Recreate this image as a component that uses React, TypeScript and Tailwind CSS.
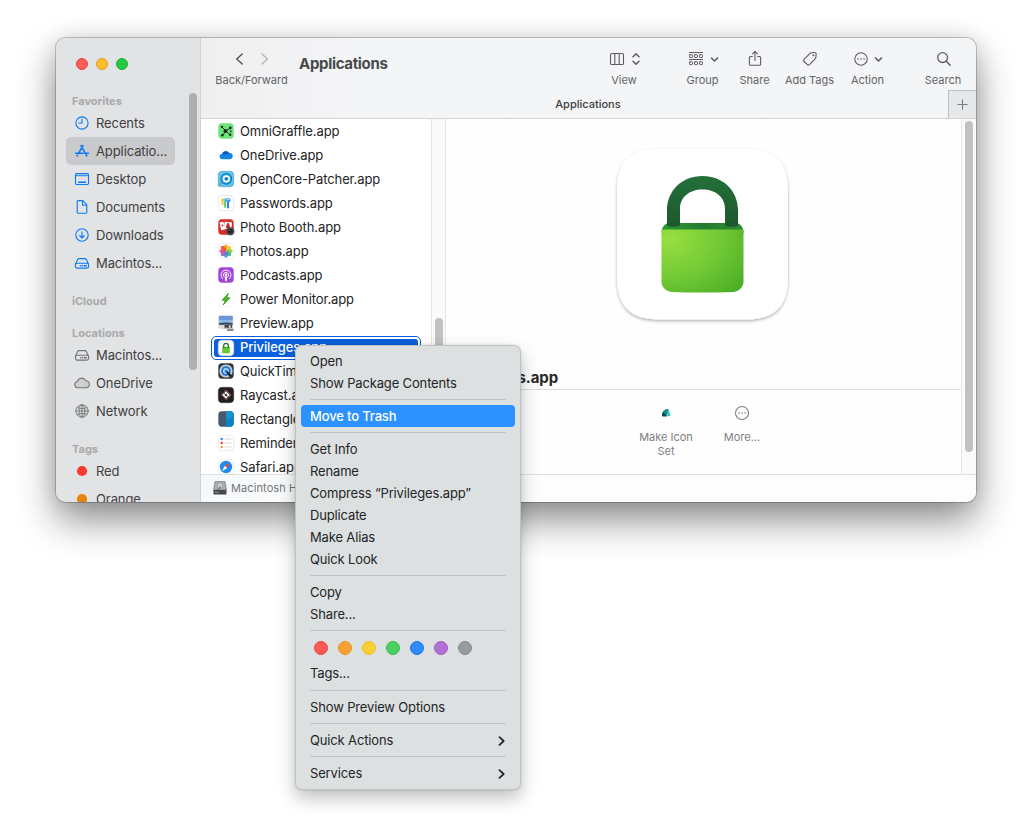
import React from "react";

type IconProps = { name: string };

const stroke = {
  fill: "none",
  stroke: "currentColor",
  strokeWidth: 1.1,
  strokeLinecap: "round" as const,
  strokeLinejoin: "round" as const,
};

function SideIcon({ name }: IconProps) {
  return (
    <svg width="16" height="16" viewBox="0 0 16 16" {...stroke} className="shrink-0">
      {name === "recents" && (
        <>
          <circle cx="8" cy="8" r="6.1" />
          <path d="M8 4v4H4.8" />
        </>
      )}
      {name === "apps" && (
        <g strokeWidth="1.6">
          <path d="M7 2.6l5.8 10.2M9 2.6L4.4 10.6M1.6 10.3h7.6M12 10.3h2.4M3.4 12.4l-.4.6" />
        </g>
      )}
      {name === "desktop" && (
        <>
          <rect x="1.5" y="2.5" width="13" height="11" rx="1.2" />
          <path d="M1.5 4.6h13" strokeOpacity=".7" />
          <path d="M2 3.6h12" strokeOpacity=".3" />
          <path d="M4 11.3h8" strokeWidth="1.4" strokeLinecap="butt" />
        </>
      )}
      {name === "doc" && (
        <path d="M4.3 1.6h4.5l4 4.2v7.4a1.1 1.1 0 0 1-1.1 1.1H4.3a1.1 1.1 0 0 1-1.1-1.1V2.7a1.1 1.1 0 0 1 1.1-1.1zM8.5 1.8v4.4h4.2" />
      )}
      {name === "down" && (
        <>
          <circle cx="8" cy="8" r="6.2" />
          <path d="M8 4.7v6.2M5.6 8.6L8 11l2.4-2.4" />
        </>
      )}
      {name === "disk" && (
        <>
          <path d="M1.5 9.2l2.1-4.6c.3-.7.8-1 1.5-1h5.8c.7 0 1.2.3 1.5 1l2.1 4.6" />
          <rect x="1.4" y="8.3" width="13.2" height="4.8" rx="1.8" />
          <path d="M6.5 10.7h.2M8.4 10.7h.2M10.3 10.7h2" strokeWidth="1.4" />
        </>
      )}
      {name === "cloud" && (
        <path
          d="M3.6 12.8a3.2 3.2 0 0 1-.3-6.3A4.500 4.500 0 0 1 11.700 5.700a3.600 3.600 0 0 1 .9 7.100z"
          fill="#cfd0d1"
        />
      )}
      {name === "globe" && (
        <g strokeWidth=".9">
          <circle cx="8" cy="8" r="6.200" />
          <ellipse cx="8" cy="8" rx="3" ry="6.200" />
          <path d="M8 1.800v12.400M1.800 8h12.400M3 4.600c3 1.400 7 1.400 10 0M3 11.400c3-1.400 7-1.400 10 0" />
        </g>
      )}
      {name === "red" && <circle cx="8" cy="8" r="5.100" fill="#fb3a2f" stroke="none" />}
      {name === "orange" && <circle cx="8" cy="8" r="5.100" fill="#e8840c" stroke="none" />}
    </svg>
  );
}

function SideRow({ icon, label, active, gray }: { icon: string; label: string; active?: boolean; gray?: boolean }) {
  return (
    <div
      className={
        "flex h-7 w-[109px] items-center gap-[6px] rounded-[5px] pl-2 text-[13px] tracking-[-0.1px] text-[#3f4041] " +
        (active ? "bg-[#c9cacc]" : "")
      }
    >
      <span className={gray ? "text-[#737475]" : "text-[#0a79f5]"}>
        <SideIcon name={icon} />
      </span>
      <span className="pt-[2px] whitespace-nowrap">{label}</span>
    </div>
  );
}

function Heading({ children }: { children: React.ReactNode }) {
  return <div className="h-4 pl-[6px] text-[11px] leading-4 font-bold text-[#a8a9aa]">{children}</div>;
}

function Sidebar() {
  return (
    <aside className="flex w-[145px] shrink-0 flex-col border-r border-[#d0d1d2] bg-[#e1e3e5]">
      <div className="flex h-[55px] shrink-0 gap-2 pt-5 pl-5">
        <span className="size-3 rounded-full border border-[#e2463f] bg-[#ff5f57]" />
        <span className="size-3 rounded-full border border-[#e0a02a] bg-[#febc2e]" />
        <span className="size-3 rounded-full border border-[#1fac32] bg-[#28c840]" />
      </div>
      <div className="flex min-h-0 flex-1">
        <div className="flex w-[133px] shrink-0 flex-col gap-4 overflow-hidden pl-[10px]">
          <section>
            <Heading>Favorites</Heading>
            <SideRow icon="recents" label="Recents" />
            <SideRow icon="apps" label="Applicatio..." active />
            <SideRow icon="desktop" label="Desktop" />
            <SideRow icon="doc" label="Documents" />
            <SideRow icon="down" label="Downloads" />
            <SideRow icon="disk" label="Macintos..." />
          </section>
          <section>
            <Heading>iCloud</Heading>
          </section>
          <section>
            <Heading>Locations</Heading>
            <SideRow icon="disk" label="Macintos..." gray />
            <SideRow icon="cloud" label="OneDrive" gray />
            <SideRow icon="globe" label="Network" gray />
          </section>
          <section>
            <Heading>Tags</Heading>
            <SideRow icon="red" label="Red" />
            <SideRow icon="orange" label="Orange" />
          </section>
        </div>
        <div className="h-[277px] w-2 rounded-full bg-[#aeafb1]" />
      </div>
    </aside>
  );
}

function Tool({ label, width, children }: { label: string; width: string; children: React.ReactNode }) {
  return (
    <div className={"flex shrink-0 flex-col items-center text-[#5c5d5f] " + width}>
      <div className="flex h-[18px] items-center justify-center gap-[6px] pl-px">{children}</div>
      <div className="mt-1 text-[11px] leading-4 whitespace-nowrap text-[#636466]">{label}</div>
    </div>
  );
}

function DownChevron() {
  return (
    <svg width="9" height="8" viewBox="0 0 9 8" {...stroke} strokeWidth="1.600">
      <path d="M1.500 3l3 3 3-3" />
    </svg>
  );
}

function Toolbar() {
  return (
    <header className="flex h-[81px] shrink-0 flex-col border-b border-[#d2d3d4] bg-linear-to-r from-[#efeff0] via-[#f4f5f7] via-20% to-[#f4f5f7]">
      <div className="flex h-[52px] shrink-0 pt-3">
        <div className="flex w-[101px] shrink-0 flex-col items-center">
          <svg width="36" height="18" viewBox="0 0 36 18" {...stroke} strokeWidth="1.300">
            <path d="M8.200 4l-5.500 5 5.500 5" stroke="#4c4d4e" />
            <path d="M28 4l5.500 5-5.500 5" stroke="#b4b5b6" />
          </svg>
          <div className="mt-1 text-[11px] leading-4 text-[#636466]">Back/Forward</div>
        </div>
        <div className="w-[288px] pt-[4px] text-[15px] leading-5 font-bold tracking-[-0.32px] text-[#48494b]">
          <span className="-ml-[3px]">Applications</span>
        </div>
        <Tool label="View" width="w-[68px]">
          <svg width="16" height="16" viewBox="0 0 16 16" {...stroke}>
            <rect x="1.500" y="2.500" width="13" height="11" rx="1.300" />
            <path d="M5.800 2.500v11M10.200 2.500v11" />
          </svg>
          <svg width="10" height="14" viewBox="0 0 10 14" {...stroke} strokeWidth="1.500">
            <path d="M2 4.800l3-3 3 3M2 9.200l3 3 3-3" />
          </svg>
        </Tool>
        <div className="w-[14px]" />
        <Tool label="Group" width="w-[61px]">
          <svg width="16" height="16" viewBox="0 0 16 16" {...stroke} strokeWidth="1">
            <path d="M1 1.500h14M1 8.500h14" strokeLinecap="butt" />
            <g>
              <rect x="1.500" y="3.700" width="3" height="2.800" rx=".6" />
              <rect x="6.500" y="3.700" width="3" height="2.800" rx=".6" />
              <rect x="11.500" y="3.700" width="3" height="2.800" rx=".6" />
              <rect x="1.500" y="10.800" width="3" height="2.800" rx=".6" />
              <rect x="6.500" y="10.800" width="3" height="2.800" rx=".6" />
              <rect x="11.500" y="10.800" width="3" height="2.800" rx=".6" />
            </g>
          </svg>
          <DownChevron />
        </Tool>
        <Tool label="Share" width="w-[43px]">
          <svg width="16" height="18" viewBox="0 0 16 18" {...stroke}>
            <path d="M5.300 6.500H3.500a1.100 1.100 0 0 0-1.100 1.100v6.600a1.100 1.100 0 0 0 1.100 1.100h9a1.100 1.100 0 0 0 1.100-1.100V7.600a1.100 1.100 0 0 0-1.100-1.100h-1.800M8 10.500V1.600M5.600 3.900L8 1.500l2.400 2.400" />
          </svg>
        </Tool>
        <Tool label="Add Tags" width="w-[67px]">
          <svg width="18" height="18" viewBox="0 0 18 18" {...stroke}>
            <path d="M3.100 9.300l5.600-5.600c.5-.5 1-.8 1.700-.9l3-.3c1.200-.1 1.800.6 1.700 1.700l-.2 3c0 .7-.3 1.200-.8 1.700l-5.600 5.700c-.7.7-1.500.7-2.200 0l-3.200-3.100c-.7-.7-.7-1.500 0-2.200z" />
            <circle cx="12.300" cy="5.300" r=".7" fill="currentColor" strokeWidth=".4" />
          </svg>
        </Tool>
        <Tool label="Action" width="w-[49px]">
          <svg width="14" height="14" viewBox="0 0 14 14" {...stroke}>
            <circle cx="7" cy="7" r="6.200" />
            <path d="M4 7h.1M7 7h.1M10 7h.1" strokeWidth="1.500" />
          </svg>
          <DownChevron />
        </Tool>
        <div className="w-[26px]" />
        <Tool label="Search" width="w-[50px]">
          <svg width="16" height="16" viewBox="0 0 16 16" {...stroke} strokeWidth="1.300">
            <circle cx="6.600" cy="6.600" r="4.900" />
            <path d="M10.200 10.200l4 4" strokeWidth="1.500" />
          </svg>
        </Tool>
      </div>
      <div className="flex flex-1">
        <div className="flex-1 pt-[6px] text-center text-[11px] leading-4 font-medium text-[#3d3e40]">
          <span className="pl-[27px]">Applications</span>
        </div>
        <div className="flex w-7 items-center justify-center border-t border-l border-[#bdbec0] bg-[#e7e8ea] pr-px text-[#7b7c7d]">
          <svg width="11" height="11" viewBox="0 0 11 11" {...stroke}>
            <path d="M5.500 .8v9.400M.8 5.500h9.400" />
          </svg>
        </div>
      </div>
    </header>
  );
}

const petals = ["#f9a51a", "#e9d52c", "#9ecb3b", "#3fb883", "#4a90d9", "#8f63b8", "#e0529c", "#f0513c"];

function Tile({ fill, edge }: { fill: string; edge?: string }) {
  return <rect x=".3" y=".3" width="15.400" height="15.400" rx="3.600" fill={fill} stroke={edge || "none"} strokeWidth=".6" />;
}

function AppIcon({ name }: IconProps) {
  return (
    <svg width="16" height="16" viewBox="0 0 16 16" className="shrink-0 overflow-visible">
      {name === "omni" && (
        <>
          <Tile fill="#6fe27c" />
          <path d="M4 4l4 4 4.500-3M4.500 12.200L8 8l4 3.800" stroke="#153a1c" strokeWidth="1" fill="none" />
          <circle cx="7.400" cy="8" r="2" fill="#12301a" />
          <g fill="#12301a">
            <circle cx="4" cy="4" r="1.200" />
            <circle cx="12.300" cy="4.900" r="1.400" />
            <circle cx="4.300" cy="12.200" r="1.300" />
            <circle cx="12.200" cy="11.800" r="1.200" />
            <circle cx="12.800" cy="8.300" r=".9" />
          </g>
        </>
      )}
      {name === "onedrive" && (
        <>
          <path d="M4.300 12.200a2.600 2.600 0 0 1-.3-5.200A4.200 4.200 0 0 1 11.300 6a3.100 3.100 0 0 1 .6 6.200z" fill="#1485de" />
          <path d="M4 7a4.200 4.200 0 0 1 7.300-1c.4.800-3 .6-4 2z" fill="#0a5cb4" />
        </>
      )}
      {name === "opencore" && (
        <>
          <Tile fill="#65c6ee" edge="#3d93bb" />
          <circle cx="8.300" cy="7.800" r="5.900" fill="#1272ae" />
          <circle cx="8.300" cy="7.800" r="4.900" fill="#26a9e2" />
          <circle cx="8.300" cy="7.800" r="3.600" fill="#fff" />
          <circle cx="8.300" cy="7.800" r="1.900" fill="#1b83bc" />
          <path d="M.2 15.300l3.200-4" stroke="#7b8891" strokeWidth="1.200" />
        </>
      )}
      {name === "passwords" && (
        <>
          <Tile fill="#fff" edge="#dcdcdc" />
          <g strokeWidth="1.700" strokeLinecap="round">
            <path d="M4.600 5v4.500" stroke="#f2c531" />
            <path d="M7.100 5.500v6.500" stroke="#5cbe55" />
            <path d="M10 6v6.500" stroke="#2287e6" strokeWidth="2" />
          </g>
          <circle cx="4.600" cy="4.700" r="1.500" fill="#f4c936" />
          <circle cx="7" cy="4.700" r="1.500" fill="#6cc7dc" />
          <circle cx="10.200" cy="5.200" r="2.300" fill="#3aa3ee" />
          <circle cx="10.200" cy="4.400" r=".7" fill="#fff" />
        </>
      )}
      {name === "booth" && (
        <>
          <Tile fill="#dc2a27" />
          <rect x="2.300" y="3" width="4" height="8" rx=".5" fill="#fff" transform="rotate(-12 4 7)" />
          <rect x="6.300" y="3" width="7.500" height="7" rx=".5" fill="#fff" transform="rotate(5 10 6)" />
          <path d="M8 9V7.500a2 2 0 0 1 4 0V9z" fill="#c42b28" />
          <circle cx="10" cy="5.300" r="1.200" fill="#c42b28" />
          <circle cx="4.500" cy="6.500" r="1" fill="#c42b28" />
          <circle cx="12.300" cy="12.300" r="4.100" fill="#484848" />
          <circle cx="12.300" cy="12.300" r="2.300" fill="#202020" />
          <circle cx="11.600" cy="11.600" r=".7" fill="#777" />
        </>
      )}
      {name === "photos" && (
        <>
          <Tile fill="#fff" edge="#e6e6e6" />
          {petals.map((c, i) => (
            <ellipse key={c} cx="8" cy="4.500" rx="2.100" ry="3.100" fill={c} fillOpacity=".92" transform={`rotate(${i * 45} 8 8)`} />
          ))}
        </>
      )}
      {name === "podcasts" && (
        <>
          <Tile fill="#a444d8" />
          <g fill="none" stroke="#fff" strokeWidth=".9" strokeLinecap="round">
            <path d="M4.500 11.700a5 5 0 1 1 7 0" />
            <path d="M5.900 9.700a2.700 2.700 0 1 1 4.200 0" />
          </g>
          <circle cx="8" cy="7.800" r="1.300" fill="#fff" />
          <path d="M6.700 10.200a1.300 1 0 0 1 2.600 0l-.5 3.300a.8.800 0 0 1-1.600 0z" fill="#fff" />
        </>
      )}
      {name === "power" && (
        <>
          <Tile fill="#fff" edge="#f1f1f1" />
          <path d="M10.500 2.200L4 9.200h3.300L5.200 14l6.800-7.200H8.600z" fill="#3fc21b" stroke="#1e6d12" strokeWidth=".6" />
        </>
      )}
      {name === "preview" && (
        <>
          <rect x=".8" y=".8" width="14" height="12.500" rx="1.200" fill="#8fb8e8" stroke="#c9ccd2" strokeWidth=".5" />
          <rect x="1" y="1" width="13.600" height="4" fill="#6c97d6" />
          <path d="M1 9.500l5-1.500 8.600 1v4H1z" fill="#e0dccf" />
          <path d="M1 8.300c5-1 9-1 13.600-.2v1.700H1z" fill="#32435c" />
          <path d="M6.500 10.200h7.500v3.600H6.500z" fill="#303338" />
          <path d="M6 12.600h9.500v1.300H6z" fill="#c8cbd0" />
          <circle cx="11.800" cy="11.500" r="1" fill="#fff" />
          <path d="M9 15h6.500" stroke="#44474c" strokeWidth="1.300" />
        </>
      )}
      {name === "lock" && (
        <>
          <Tile fill="#fff" edge="#e4e4e4" />
          <path d="M5.700 7.500V5.600a2.300 2.300 0 0 1 4.600 0v1.900" fill="none" stroke="#236b38" strokeWidth="1.300" />
          <rect x="4.200" y="7" width="7.600" height="6.300" rx="1" fill="#66c530" />
          <path d="M4.300 7.400h7.400" stroke="#2b8a35" strokeWidth=".8" />
        </>
      )}
      {name === "quicktime" && (
        <>
          <Tile fill="#34383f" />
          <circle cx="8" cy="8" r="6.600" fill="#c9ced4" />
          <circle cx="8" cy="8" r="4.800" fill="#2173cf" />
          <circle cx="8" cy="8" r="3" fill="#a7dcfb" />
          <circle cx="8.200" cy="8.200" r="1.600" fill="#2c7cd0" />
          <path d="M9 9l4.200 4.500" stroke="#1d222b" strokeWidth="2.400" />
        </>
      )}
      {name === "raycast" && (
        <>
          <Tile fill="#201f21" edge="#5a3335" />
          <path d="M8 3L13 8l-5 5-5-5z" fill="none" stroke="#c95c5a" strokeWidth=".8" />
          <path d="M8 4.200L11.800 8 8 11.800 4.200 8z" fill="#fff" />
          <path d="M4.500 4.800l6.800 6.800M2.700 8l5.300 5.300" stroke="#201f21" strokeWidth=".7" />
          <path d="M8 6.500L9.500 8 8 9.500 6.500 8z" fill="#3a2527" />
        </>
      )}
      {name === "rectangle" && (
        <>
          <Tile fill="#47596e" />
          <path d="M8 .3h4.100a3.600 3.600 0 0 1 3.600 3.600v8.200a3.600 3.600 0 0 1-3.600 3.600H8z" fill="#0b83c0" />
          <path d="M8 .3h4.100a3.600 3.600 0 0 1 3.600 3.600V6L8 10z" fill="#1792ce" />
        </>
      )}
      {name === "reminders" && (
        <>
          <Tile fill="#fff" edge="#dfdfdf" />
          <circle cx="3.700" cy="4" r="1.200" fill="#2d7ff0" />
          <circle cx="3.700" cy="8" r="1.200" fill="#ee4136" />
          <circle cx="3.700" cy="12" r="1.200" fill="#f6981e" />
          <path d="M6.500 4h7M6.500 8h7M6.500 12h7" stroke="#d2d2d4" strokeWidth=".9" />
        </>
      )}
      {name === "safari" && (
        <>
          <Tile fill="#fff" edge="#e3e3e3" />
          <circle cx="8" cy="8" r="6.200" fill="#1f8cf0" />
          <path d="M12 4L9.200 9.200 6.800 6.800z" fill="#f04438" />
          <path d="M4 12l2.800-5.200 2.400 2.400z" fill="#fff" />
        </>
      )}
    </svg>
  );
}

const files: [string, string][] = [
  ["omni", "OmniGraffle.app"],
  ["onedrive", "OneDrive.app"],
  ["opencore", "OpenCore-Patcher.app"],
  ["passwords", "Passwords.app"],
  ["booth", "Photo Booth.app"],
  ["photos", "Photos.app"],
  ["podcasts", "Podcasts.app"],
  ["power", "Power Monitor.app"],
  ["preview", "Preview.app"],
  ["lock", "Privileges.app"],
  ["quicktime", "QuickTime Player.app"],
  ["raycast", "Raycast.app"],
  ["rectangle", "Rectangle.app"],
  ["reminders", "Reminders.app"],
  ["safari", "Safari.app"],
];

function FileList() {
  return (
    <div className="w-[230px] shrink-0 overflow-hidden pl-[10px] text-[13px] tracking-[-0.1px]">
      {files.map(([icon, label], i) =>
        icon === "lock" ? (
          <div key={i} className="mt-px -mb-px h-6 w-[210px] rounded-[5px] border border-[#0a5fd9] p-[2px]">
            <div className="flex h-full items-center gap-[6px] rounded-[3px] bg-[#0a60dd] pl-1 font-medium text-white">
              <span className="-mt-px">
                <AppIcon name={icon} />
              </span>
              <span>{label}</span>
            </div>
          </div>
        ) : (
          <div key={i} className="flex h-6 items-center gap-[6px] pl-[7px] text-[#232324]">
            <AppIcon name={icon} />
            <span className="pt-px whitespace-nowrap">{label}</span>
          </div>
        )
      )}
    </div>
  );
}

function BigLock() {
  return (
    <svg width="190" height="190" viewBox="0 0 190 190" className="overflow-visible">
      <defs>
        <radialGradient id="body" cx=".1" cy=".15" r="1.200">
          <stop offset="0" stopColor="#98df41" />
          <stop offset=".5" stopColor="#73ca35" />
          <stop offset="1" stopColor="#48ab25" />
        </radialGradient>
        <linearGradient id="shackle" x1="0" y1="0" x2="0" y2="1">
          <stop offset="0" stopColor="#24703a" />
          <stop offset="1" stopColor="#1d572d" />
        </linearGradient>
        <linearGradient id="lid" x1="0" y1="0" x2="1" y2="0">
          <stop offset="0" stopColor="#2d9a2d" />
          <stop offset=".5" stopColor="#257c31" />
          <stop offset="1" stopColor="#2d8c30" />
        </linearGradient>
        <filter id="soft" x="-20%" y="-20%" width="140%" height="140%">
          <feDropShadow dx="0" dy="1.500" stdDeviation="1.700" floodColor="#000" floodOpacity=".32" />
        </filter>
      </defs>
      <path
        d="M51 10h88c29 0 42 13 42 42v86c0 29-13 42.500-42 42.500H52C23 180.500 10 167 10 138V52c0-29 12-42 41-42z"
        fill="#fff"
        filter="url(#soft)"
      />
      <g transform="translate(0 .5)">
        <path d="M54.500 93.500c0-5.500 3-10 8-10h66c5 0 8 4.500 8 10z" fill="url(#lid)" />
        <path
          d="M60 86V71c0-20 15-34.500 35.500-34.500S131 51 131 71v15c-3 1.800-10 1.800-13 0V69c0-11-9-19-22.500-19S73 58 73 69v17c-3 1.800-10 1.800-13 0z"
          fill="url(#shackle)"
        />
        <path d="M54.500 90h82v52.500c0 5-5 9.500-10 9.900-20 .8-42 .8-62 0-5-.4-10-4.900-10-9.900z" fill="url(#body)" />
      </g>
    </svg>
  );
}

function Preview() {
  return (
    <div className="flex min-w-0 flex-1 flex-col bg-[#fefefe]">
      <div className="flex h-[271px] shrink-0 flex-col border-b border-[#dededf]">
        <div className="flex h-[248px] justify-center pt-5 pr-[3px]">
          <BigLock />
        </div>
        <div className="pl-[7px] text-[15px] leading-[22px] font-bold tracking-[-0.1px] text-[#29292a]">
          <div className="w-[105px] text-right whitespace-nowrap">Privileges.app</div>
        </div>
      </div>
      <div className="flex pt-[15px] pl-[182px] text-center text-[11px] leading-[14px] text-[#7d7e7f]">
        <div className="flex w-[76px] flex-col items-center">
          <svg width="16" height="16" viewBox="0 0 16 16">
            <path d="M4.200 11.200c-.5-3 .8-6 4.200-7.200l2 .3 1.800 6.700z" fill="#168c8b" />
            <path d="M4.200 11.200c-.3-1.500 0-3 1-4.500L9 11.400z" fill="#143f50" />
            <path d="M8.300 11.300l2-6.500 2 6z" fill="#31d2bd" />
          </svg>
          <div className="mt-[9px] w-[60px]">Make Icon Set</div>
        </div>
        <div className="flex w-[76px] flex-col items-center">
          <svg width="16" height="16" viewBox="0 0 16 16" {...stroke}>
            <circle cx="8" cy="8" r="6.500" />
            <path d="M5 8h.1M8 8h.1M11 8h.1" strokeWidth="1.500" />
          </svg>
          <div className="mt-[9px]">More...</div>
        </div>
      </div>
    </div>
  );
}

function MenuItem({ label, active, arrow }: { label: string; active?: boolean; arrow?: boolean }) {
  return (
    <div
      className={
        "mx-[5px] flex h-[22px] items-center justify-between rounded-[4px] px-[9px] whitespace-nowrap " +
        (active ? "bg-[#2b92ff] font-medium text-white" : "")
      }
    >
      <span className="pt-[2px]">{label}</span>
      {arrow && (
        <svg width="9" height="12" viewBox="0 0 9 12" {...stroke} strokeWidth="1.800" className="mt-px">
          <path d="M2.500 2.200L6.700 6l-4.200 3.800" />
        </svg>
      )}
    </div>
  );
}

function Separator() {
  return <div className="mx-[14px] mt-[5px] mb-[5px] h-px bg-[#c0c4c5]" />;
}

function ContextMenu() {
  return (
    <div className="absolute top-[345px] left-[295px] flex h-[445px] w-[226px] flex-col rounded-[7px] border border-[#bfc2c3] bg-[#dce0e1] pt-1 text-[13px] tracking-[-0.15px] text-[#242526] shadow-[0_8px_18px_rgba(0,0,0,0.25),0_0_3px_rgba(0,0,0,0.12)]">
      <MenuItem label="Open" />
      <MenuItem label="Show Package Contents" />
      <Separator />
      <MenuItem label="Move to Trash" active />
      <Separator />
      <MenuItem label="Get Info" />
      <MenuItem label="Rename" />
      <MenuItem label="Compress “Privileges.app”" />
      <MenuItem label="Duplicate" />
      <MenuItem label="Make Alias" />
      <MenuItem label="Quick Look" />
      <Separator />
      <MenuItem label="Copy" />
      <MenuItem label="Share..." />
      <Separator />
      <div className="flex h-[25px] gap-[10px] pt-[5px] pl-[18px]">
        <span className="size-[14px] rounded-full border border-[#f0443c] bg-[#fc5b53]" />
        <span className="size-[14px] rounded-full border border-[#ee9020] bg-[#f8a136]" />
        <span className="size-[14px] rounded-full border border-[#ecc11d] bg-[#f8cf36]" />
        <span className="size-[14px] rounded-full border border-[#31bf49] bg-[#4bcf60]" />
        <span className="size-[14px] rounded-full border border-[#1475ec] bg-[#318cfa]" />
        <span className="size-[14px] rounded-full border border-[#a258ca] bg-[#b36fd8]" />
        <span className="size-[14px] rounded-full border border-[#87878a] bg-[#9a9a9d]" />
      </div>
      <div className="flex h-6 items-center pt-[2px] pl-[14px]">Tags...</div>
      <Separator />
      <MenuItem label="Show Preview Options" />
      <Separator />
      <MenuItem label="Quick Actions" arrow />
      <Separator />
      <MenuItem label="Services" arrow />
    </div>
  );
}

export default function App() {
  return (
    <div className="relative h-[816px] w-[1032px] overflow-hidden bg-white pt-[38px] pl-[56px] font-['Inter','Liberation_Sans',sans-serif]">
      <div className="flex h-[464px] w-[920px] overflow-hidden rounded-[10px] bg-white shadow-[0_0_0_1px_rgba(0,0,0,0.2),0_18px_38px_rgba(0,0,0,0.45),0_0_20px_rgba(0,0,0,0.1)]">
        <Sidebar />
        <main className="flex min-w-0 flex-1 flex-col">
          <Toolbar />
          <div className="flex min-h-0 flex-1">
            <FileList />
            <div className="flex w-[15px] shrink-0 flex-col items-center border-x border-[#e5e5e6] bg-[#fafafa] pt-[199px]">
              <div className="h-[90px] w-2 rounded-full bg-[#c1c1c2]" />
            </div>
            <Preview />
            <div className="flex w-[15px] shrink-0 flex-col items-center border-l border-[#e5e5e6] bg-[#fafafa] pt-[2px]">
              <div className="h-[331px] w-2 rounded-full bg-[#c1c1c2]" />
            </div>
          </div>
          <footer className="flex h-7 shrink-0 items-center gap-1 border-t border-[#dfe0e1] bg-linear-to-r from-[#f6f9fb] to-[#fdfdfd] to-30% pl-3 text-[11px] tracking-[0.1px] text-[#747576]">
            <svg width="14" height="14" viewBox="0 0 14 14" className="mb-[2px]">
              <path d="M2 .5h10l1.500 8.500H.5z" fill="#a9adb0" stroke="#6b6f73" strokeWidth=".6" />
              <circle cx="7" cy="4.500" r="2.800" fill="#c8ccd0" stroke="#888d92" strokeWidth=".6" />
              <path d="M7.500 5.500L5 9" stroke="#5a5e62" />
              <rect x=".5" y="9" width="13" height="4.500" rx=".6" fill="#45494c" />
              <path d="M2 11.300h4" stroke="#8b8f93" />
            </svg>
            <span>Macintosh HD</span>
          </footer>
        </main>
      </div>
      <ContextMenu />
    </div>
  );
}
